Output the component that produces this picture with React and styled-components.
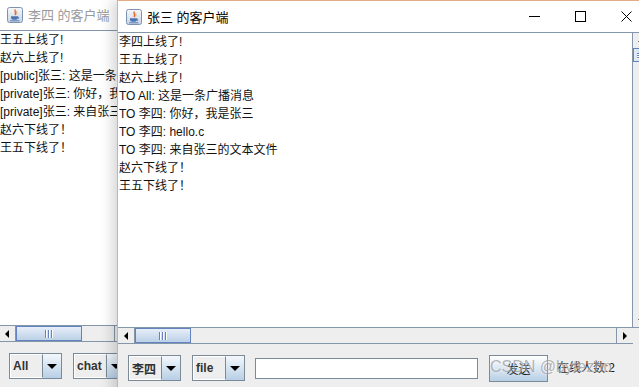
import React from "react";
import styled, { createGlobalStyle } from "styled-components";

const GlobalStyle = createGlobalStyle`
  html, body {
    margin: 0;
    padding: 0;
    background: #ffffff;
    overflow: hidden;
  }
  body {
    font-family: "Liberation Sans", "Noto Sans CJK SC", sans-serif;
    font-size: 12px;
  }
`;

const Desktop = styled.div`
  position: relative;
  width: 639px;
  height: 387px;
  overflow: hidden;
  background: #ffffff;
`;

// windows on a desktop: their place is the content itself
const Frame = styled.div`
  position: absolute;
  left: ${props => props.$left}px;
  top: ${props => props.$top}px;
  width: ${props => props.$width}px;
  height: 420px;
  box-sizing: border-box;
  display: flex;
  flex-direction: column;
  overflow: hidden;
  background: #eeeeee;
  border: 1px solid ${props => (props.$active ? "#e4ab86" : "#b4b4b4")};
  box-shadow: ${props =>
    props.$active ? "-5px 0 12px rgba(0, 0, 0, 0.16)" : "none"};
`;

const TitleBar = styled.div`
  height: 31px;
  flex-shrink: 0;
  display: flex;
  align-items: center;
  padding-left: 8px;
  background: #ffffff;
  border-bottom: 1px solid #8496aa;
`;

const Title = styled.span`
  margin-left: 5px;
  font-size: 13px;
  color: ${props => (props.$active ? "#000000" : "#9a9a9a")};
  white-space: pre;
`;

const Controls = styled.div`
  margin-left: auto;
  display: flex;
  height: 100%;
`;

const Control = styled.div`
  width: 46px;
  height: 100%;
  display: flex;
  align-items: center;
  justify-content: center;
`;

const ScrollPane = styled.div`
  display: grid;
  grid-template-columns: 1fr 16px;
  grid-template-rows: 295px 16px;
  flex-shrink: 0;
`;

const Viewport = styled.div`
  background: #ffffff;
  border-right: 1px solid #8496aa;
  border-bottom: 1px solid #8496aa;
  padding: 0 0 0 1px;
  overflow: hidden;
`;

const Line = styled.div`
  height: 18px;
  line-height: 18px;
  font-size: 12px;
  color: #111111;
  white-space: nowrap;
  overflow: hidden;
`;

const VScroll = styled.div`
  display: flex;
  flex-direction: column;
  background: #eeeeee;
  border-bottom: 1px solid #8496aa;
`;

const ArrowButton = styled.div`
  width: ${props => props.$w || 15}px;
  height: ${props => props.$h || 15}px;
  flex-shrink: 0;
  display: flex;
  align-items: center;
  justify-content: center;
  background: #eeeeee;
  border-right: ${props => (props.$side === "left" ? "1px solid #8496aa" : "none")};
  border-left: ${props => (props.$side === "right" ? "1px solid #8496aa" : "none")};
`;

const Track = styled.div`
  flex: 1;
  background: #eeeeee;
`;

const VThumb = styled.div`
  height: 14px;
  flex-shrink: 0;
  box-sizing: border-box;
  border: 1px solid #6382bf;
  background: linear-gradient(to right, #e4edf7, #b8cfe5);
  display: flex;
  flex-direction: column;
  justify-content: center;
  gap: 1px;
  padding-left: 3px;
`;

const HScroll = styled.div`
  display: flex;
  background: #eeeeee;
  border-bottom: 1px solid #8496aa;
`;

const HThumb = styled.div`
  width: ${props => props.$w}px;
  flex-shrink: 0;
  box-sizing: border-box;
  border: 1px solid #6382bf;
  background: linear-gradient(to bottom, #e6eef8, #bcd1e7);
  display: flex;
  align-items: center;
  justify-content: center;
  gap: 1px;
`;

const Grip = styled.span`
  display: block;
  background: #6382bf;
  width: ${props => (props.$vertical ? "6px" : "1px")};
  height: ${props => (props.$vertical ? "1px" : "8px")};
  box-shadow: ${props => (props.$vertical ? "0 1px 0 #fff" : "1px 0 0 #fff")};
  margin-right: ${props => (props.$vertical ? 0 : 1)}px;
`;

const Corner = styled.div`
  background: #eeeeee;
`;

const Panel = styled.div`
  flex: 1;
  display: flex;
  align-items: flex-start;
  padding: 11px 10px 0;
  background: #eeeeee;
`;

const Combo = styled.div`
  width: 53px;
  height: 26px;
  box-sizing: border-box;
  margin-right: 11px;
  display: flex;
  border: 1px solid #7a8a99;
  flex-shrink: 0;
`;

const ComboValue = styled.div`
  flex: 1;
  box-sizing: border-box;
  border: 1px solid #ffffff;
  border-right: 1px solid #7a8a99;
  background: #eeeeee;
  display: flex;
  align-items: center;
  padding-left: 2px;
  font-size: 12px;
  font-weight: bold;
  color: #333333;
`;

const ComboArrow = styled.div`
  width: 18px;
  display: flex;
  align-items: center;
  justify-content: center;
  background: linear-gradient(to bottom, #f4f8fc, #b8cfe5);
`;

const TextField = styled.div`
  width: 223px;
  height: 21px;
  box-sizing: border-box;
  margin-top: 3px;
  margin-left: -1px;
  border: 1px solid #7a8a99;
  box-shadow: inset 1px 1px 0 #ffffff;
  background: #ffffff;
  flex-shrink: 0;
`;

const Button = styled.div`
  width: 59px;
  height: 27px;
  box-sizing: border-box;
  margin-left: 11px;
  display: flex;
  align-items: center;
  justify-content: center;
  border: 1px solid #7a8a99;
  background: linear-gradient(to bottom, #ffffff, #b8cfe5);
  font-size: 12px;
  color: #111111;
  flex-shrink: 0;
`;

const Label = styled.span`
  margin-left: 9px;
  line-height: 27px;
  font-size: 12px;
  color: #111111;
  white-space: nowrap;
`;

const Watermark = styled.div`
  position: absolute;
  left: 490px;
  top: 358px;
  font-size: 16px;
  color: rgba(120, 120, 120, 0.55);
  text-shadow: 0 0 2px rgba(255, 255, 255, 0.8);
  white-space: nowrap;
  pointer-events: none;
`;

const JavaIcon = () => (
  <svg width="16" height="16" viewBox="0 0 16 16">
    <defs>
      <linearGradient id="jbg" x1="0" y1="0" x2="0" y2="1">
        <stop offset="0" stopColor="#f6f8fb" />
        <stop offset="1" stopColor="#c9d5e4" />
      </linearGradient>
    </defs>
    <rect x="0.5" y="0.5" width="15" height="15" rx="2" fill="url(#jbg)" stroke="#7d92b0" />
    <path d="M8.5 2.5 C6.5 4.5 10 5.5 8 8" fill="none" stroke="#e0641e" strokeWidth="1.3" />
    <path d="M10 4 C9 5.2 10.5 6 9.6 7.4" fill="none" stroke="#e88a3c" strokeWidth="0.9" />
    <path d="M4 9.2 h7 v1.3 a2.3 2.3 0 0 1 -2.3 2.3 h-2.4 a2.3 2.3 0 0 1 -2.3 -2.3z" fill="#4d73b2" />
    <path d="M11 9.8 a1.2 1.2 0 0 1 0 2.2" fill="none" stroke="#4d73b2" strokeWidth="0.9" />
    <rect x="3" y="13.3" width="9.5" height="1" fill="#5a7fba" />
  </svg>
);

const Triangle = ({ dir, size = 4 }) => {
  const s = size;
  const points = {
    down: `0,0 ${s * 2},0 ${s},${s}`,
    up: `0,${s} ${s * 2},${s} ${s},0`,
    left: `${s},0 ${s},${s * 2} 0,${s}`,
    right: `0,0 0,${s * 2} ${s},${s}`
  }[dir];
  const vertical = dir === "up" || dir === "down";
  return (
    <svg width={vertical ? s * 2 : s} height={vertical ? s : s * 2}>
      <polygon points={points} fill="#000" />
    </svg>
  );
};

const WindowControls = () => (
  <Controls>
    <Control>
      <svg width="11" height="11" viewBox="0 0 11 11">
        <line x1="0" y1="5.5" x2="11" y2="5.5" stroke="#000" strokeWidth="1" />
      </svg>
    </Control>
    <Control>
      <svg width="11" height="11" viewBox="0 0 11 11">
        <rect x="0.5" y="0.5" width="10" height="10" fill="none" stroke="#000" strokeWidth="1" />
      </svg>
    </Control>
    <Control>
      <svg width="11" height="11" viewBox="0 0 11 11">
        <path d="M0.5 0.5 L10.5 10.5 M10.5 0.5 L0.5 10.5" stroke="#000" strokeWidth="1" />
      </svg>
    </Control>
  </Controls>
);

const ComboBox = ({ value }) => (
  <Combo>
    <ComboValue>{value}</ComboValue>
    <ComboArrow>
      <Triangle dir="down" size={5} />
    </ComboArrow>
  </Combo>
);

const ChatWindow = ({
  title,
  active,
  left,
  top,
  width,
  lines,
  target,
  mode,
  thumb
}) => (
  <Frame $left={left} $top={top} $width={width} $active={active}>
    <TitleBar>
      <JavaIcon />
      <Title $active={active}>{title}</Title>
      {active && <WindowControls />}
    </TitleBar>
    <ScrollPane>
      <Viewport>
        {lines.map((line, i) => (
          <Line key={i}>{line}</Line>
        ))}
      </Viewport>
      <VScroll>
        <ArrowButton $w={16} $h={15}>
          <Triangle dir="up" size={3} />
        </ArrowButton>
        <VThumb>
          <Grip $vertical />
          <Grip $vertical />
          <Grip $vertical />
        </VThumb>
        <Track />
        <ArrowButton $w={16} $h={14}>
          <Triangle dir="down" size={3} />
        </ArrowButton>
      </VScroll>
      <HScroll>
        <ArrowButton $side="left" $w={16} $h={15}>
          <Triangle dir="left" size={4} />
        </ArrowButton>
        <HThumb $w={thumb}>
          <Grip />
          <Grip />
          <Grip />
        </HThumb>
        <Track />
        <ArrowButton $side="right" $w={16} $h={15}>
          <Triangle dir="right" size={4} />
        </ArrowButton>
      </HScroll>
      <Corner />
    </ScrollPane>
    <Panel>
      <ComboBox value={target} />
      <ComboBox value={mode} />
      {active && (
        <>
          <TextField />
          <Button>发送</Button>
          <Label>在线人数:2</Label>
        </>
      )}
    </Panel>
  </Frame>
);

const lisiLines = [
  "王五上线了!",
  "赵六上线了!",
  "[public]张三: 这是一条广播消息",
  "[private]张三: 你好，我是张三",
  "[private]张三: 来自张三的文本文件",
  "赵六下线了！",
  "王五下线了！"
];

const zhangsanLines = [
  "李四上线了!",
  "王五上线了!",
  "赵六上线了!",
  "TO All: 这是一条广播消息",
  "TO 李四: 你好，我是张三",
  "TO 李四: hello.c",
  "TO 李四: 来自张三的文本文件",
  "赵六下线了！",
  "王五下线了！"
];

export default function App() {
  return (
    <>
      <GlobalStyle />
      <Desktop>
        <ChatWindow
          title="李四 的客户端"
          left={-2}
          top={-2}
          width={150}
          lines={lisiLines}
          target="All"
          mode="chat"
          thumb={66}
        />
        <ChatWindow
          title="张三 的客户端"
          active
          left={117}
          top={0}
          width={533}
          lines={zhangsanLines}
          target="李四"
          mode="file"
          thumb={56}
        />
        <Watermark>CSDN @bytezhn</Watermark>
      </Desktop>
    </>
  );
}
